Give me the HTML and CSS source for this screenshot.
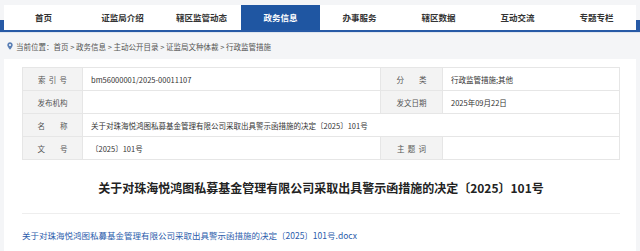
FILE: index.html
```html
<!DOCTYPE html>
<html lang="zh-CN">
<head>
    <meta charset="UTF-8">
    <meta name="viewport" content="width=device-width, initial-scale=1.0">
    <title>行政监管措施</title>
    <link rel="stylesheet" href="styles.css">
</head>
<body>

    <!-- Top navigation -->
    <div class="header">
        <div class="nav">
            <a href="#">首页</a>
            <a href="#">证监局介绍</a>
            <a href="#">辖区监管动态</a>
            <a href="#" class="active">政务信息</a>
            <a href="#">办事服务</a>
            <a href="#">辖区数据</a>
            <a href="#">互动交流</a>
            <a href="#">专题专栏</a>
        </div>
    </div>

    <!-- Breadcrumb -->
    <div class="crumb">
        <svg class="pin" width="6" height="8" viewBox="0 0 6 8">
            <path d="M3 0.3C1.5 0.3 0.3 1.5 0.3 3c0 2 2.7 4.7 2.7 4.7S5.7 5 5.7 3C5.7 1.5 4.5 0.3 3 0.3z" fill="#5a7fb5"/>
            <circle cx="3" cy="3" r="1" fill="#fff"/>
        </svg>
        <span>当前位置：首页 &gt; 政务信息 &gt; 主动公开目录 &gt; 证监局文种体裁 &gt; 行政监管措施</span>
    </div>

    <!-- Content -->
    <div class="content">
        <table class="info-table">
            <colgroup>
                <col class="c-label">
                <col class="c-value">
                <col class="c-label2">
                <col>
            </colgroup>
            <tr>
                <th>索&nbsp;&nbsp;引&nbsp;&nbsp;号</th>
                <td>bm56000001/2025-00011107</td>
                <th>分&emsp;&emsp;类</th>
                <td>行政监管措施;其他</td>
            </tr>
            <tr>
                <th>发布机构</th>
                <td></td>
                <th>发文日期</th>
                <td>2025年09月22日</td>
            </tr>
            <tr>
                <th>名&emsp;&emsp;称</th>
                <td colspan="3">关于对珠海悦鸿图私募基金管理有限公司采取出具警示函措施的决定〔2025〕101号</td>
            </tr>
            <tr>
                <th>文&emsp;&emsp;号</th>
                <td>〔2025〕101号</td>
                <th>主&nbsp;&nbsp;题&nbsp;&nbsp;词</th>
                <td></td>
            </tr>
        </table>

        <h2 class="doc-title">关于对珠海悦鸿图私募基金管理有限公司采取出具警示函措施的决定〔2025〕101号</h2>

        <div class="attach">
            <a href="#">关于对珠海悦鸿图私募基金管理有限公司采取出具警示函措施的决定〔2025〕101号.docx</a>
        </div>
    </div>

</body>
</html>
```

FILE: styles.css
```css
/* General styling */
* {
    margin: 0;
    padding: 0;
    box-sizing: border-box;
    font-family: "Noto Sans CJK SC", "Noto Sans", sans-serif;
}

body {
    background-color: #f4f5f7;
}

/* Top navigation */
.header {
    padding: 5px 4px 2px;
    background: linear-gradient(to bottom, #f4f5f7 20px, #275aa6 20px);
    border-bottom: 1px solid #dfe5ee;
}

.nav {
    display: grid;
    grid-template-columns: repeat(8, 1fr);
    background-color: white;
    height: 25px;
}

.nav a {
    text-align: center;
    line-height: 25px;
    font-size: 8.5px;
    font-weight: bold;
    color: #333;
    text-decoration: none;
}

.nav a.active {
    background-color: #1f56a2;
    color: white;
}

/* Breadcrumb */
.crumb {
    display: flex;
    align-items: center;
    height: 26px;
    padding-left: 7px;
    font-size: 7.5px;
    color: #555;
}

.crumb .pin {
    margin-right: 3px;
}

/* Content box */
.content {
    background-color: white;
    margin: 0 4px;
    padding: 8px 16px 20px 18px;
}

.info-table {
    width: 598px;
    border-collapse: collapse;
    table-layout: fixed;
    font-size: 7.5px;
}

.info-table .c-label {
    width: 60px;
}

.info-table .c-value {
    width: 298px;
}

.info-table .c-label2 {
    width: 62px;
}

.info-table th,
.info-table td {
    border: 1px solid #e6e6e6;
    height: 23px;
}

.info-table th {
    background-color: #f3f3f3;
    font-weight: normal;
    color: #555;
    text-align: center;
}

.info-table td {
    color: #333;
    padding-left: 8px;
}

.doc-title {
    margin: 19px 0 0;
    padding-bottom: 16px;
    border-bottom: 1px solid #eeeeee;
    font-size: 12px;
    line-height: 18px;
    font-weight: bold;
    color: #222;
    text-align: center;
}

.attach {
    padding-top: 16px;
    font-size: 8.5px;
    line-height: 10px;
}

.attach a {
    color: #2b5cab;
    text-decoration: none;
}
```
